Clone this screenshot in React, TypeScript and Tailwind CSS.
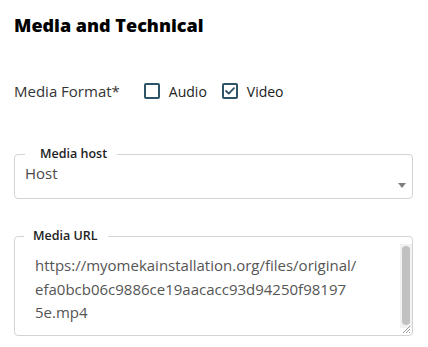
import React from "react";

export default function App() {
  return (
    <div
      className="w-[428px] h-[347px] bg-white pl-[14px] pr-[15px] pt-[13px] text-[#333]"
      style={{ fontFamily: "'Open Sans', Lato, sans-serif" }}
    >
      <h2 className="text-[18px] leading-[24px] font-extrabold text-black">
        Media and Technical
      </h2>

      <div className="mt-[44px] flex items-center h-[20px] text-[15px] text-[#333]">
        <span>Media Format*</span>
        <label className="ml-[24px] flex items-center">
          <span className="w-[16px] h-[16px] border-2 border-[#2e5467] rounded-[2px] bg-white" />
          <span className="ml-[9px] text-[14px] text-[#222]">Audio</span>
        </label>
        <label className="ml-[15px] flex items-center">
          <span className="w-[16px] h-[16px] border-2 border-[#2e5467] rounded-[2px] bg-white flex items-center justify-center">
            <svg width="10" height="8" viewBox="0 0 10 8" fill="none">
              <path d="M1 4 L3.8 6.6 L9 1.2" stroke="#2e5467" strokeWidth="1.8" strokeLinecap="round" strokeLinejoin="round" />
            </svg>
          </span>
          <span className="ml-[9px] text-[14px] text-[#222]">Video</span>
        </label>
      </div>

      <fieldset className="mt-[44px] border border-[#d0d4d9] rounded-[4px] px-[10px] relative">
        <legend className="ml-[0px] pl-[15px] pr-[10px] text-[12.5px] leading-[18px] font-semibold text-[#222]">
          Media host
        </legend>
        <div className="h-[35px] text-[15px] leading-[20px] text-[#4a4a4a]">Host</div>
        <div className="absolute right-[6px] top-[20px] w-0 h-0 border-l-[4px] border-r-[4px] border-t-[5px] border-l-transparent border-r-transparent border-t-[#808080]" />
      </fieldset>

      <fieldset className="mt-[28px] border border-[#d0d4d9] rounded-[4px] pl-[20px] pr-[30px] relative">
        <legend className="ml-[-11px] pl-[9px] pr-[10px] text-[12.5px] leading-[18px] font-semibold text-[#222]">
          Media URL
        </legend>
        <div className="h-[90px] pt-[9px] text-[15px] leading-[23.5px] text-[#555]">
          <div>https://myomekainstallation.org/files/original/</div>
          <div>efa0bcb06c9886ce19aacacc93d94250f98197</div>
          <div>5e.mp4</div>
        </div>
        <div className="absolute right-[0px] top-[-1px] w-[12px] h-[84px] bg-[#f1f1f1] flex justify-center pt-[2px]">
          <div className="w-[8px] h-[79px] rounded-full bg-[#c1c1c1]" />
        </div>
        <svg className="absolute right-[1px] bottom-[1px]" width="11" height="11" viewBox="0 0 11 11">
          <path d="M10 3 L3 10 M10 6 L6 10 M10 9 L9 10" stroke="#9a9a9a" strokeWidth="1" />
        </svg>
      </fieldset>
    </div>
  );
}
